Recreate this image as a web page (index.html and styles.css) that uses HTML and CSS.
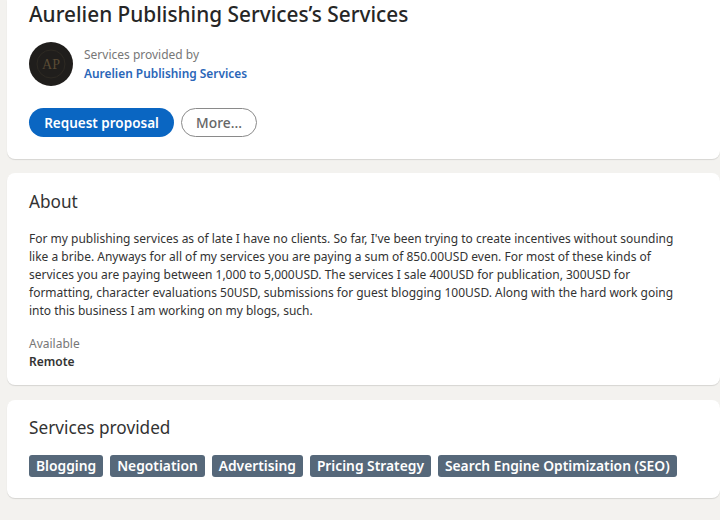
FILE: index.html
```html
<!DOCTYPE html>
<html>
<head>
    <title>Aurelien Publishing Services's Services</title>
    <link rel="stylesheet" href="styles.css">
</head>
<body>
    <div class="page">
        <section class="card card-top">
            <h1>Aurelien Publishing Services’s Services</h1>
            <div class="provider">
                <svg class="avatar" width="44" height="44" viewBox="0 0 44 44">
                    <circle cx="22" cy="22" r="22" fill="#201e1c"/>
                    <circle cx="22" cy="22" r="14" fill="none" stroke="#2e2a23" stroke-width="1"/>
                    <text x="22" y="27" text-anchor="middle" class="avatar-text">AP</text>
                </svg>
                <div class="provider-text">
                    <div class="provider-label">Services provided by</div>
                    <a class="provider-name">Aurelien Publishing Services</a>
                </div>
            </div>
            <div class="actions">
                <button class="btn btn-primary">Request proposal</button>
                <button class="btn btn-more">More...</button>
            </div>
        </section>

        <section class="card card-about">
            <h2>About</h2>
            <p class="about-text">For my publishing services as of late I have no clients. So far, I've been trying to create incentives without sounding like a bribe. Anyways for all of my services you are paying a sum of 850.00USD even. For most of these kinds of services you are paying between 1,000 to 5,000USD. The services I sale 400USD for publication, 300USD for formatting, character evaluations 50USD, submissions for guest blogging 100USD. Along with the hard work going into this business I am working on my blogs, such.</p>
            <div class="avail-label">Available</div>
            <div class="avail-value">Remote</div>
        </section>

        <section class="card card-services">
            <h2>Services provided</h2>
            <div class="tags">
                <span class="tag">Blogging</span>
                <span class="tag">Negotiation</span>
                <span class="tag">Advertising</span>
                <span class="tag">Pricing Strategy</span>
                <span class="tag">Search Engine Optimization (SEO)</span>
            </div>
        </section>
    </div>
</body>
</html>
```
FILE: styles.css
```css
html, body {
    margin: 0;
    height: 520px;
    overflow: hidden;
}
body {
    background-color: #f3f2ef;
    font-family: "Noto Sans", "Open Sans", sans-serif;
    color: #2b2b2b;
}
.page {
    display: flex;
    flex-direction: column;
    gap: 14px;
    padding-left: 7px;
}
.card {
    background: #fff;
    border-radius: 0 0 8px 8px;
    box-shadow: 0 1px 1px rgba(0, 0, 0, 0.12);
    padding: 0 22px;
}
.card-top {
    height: 159px;
    box-sizing: border-box;
}
.card-about {
    height: 212px;
    box-sizing: border-box;
    border-radius: 8px;
    padding-top: 17px;
}
.card-services {
    height: 98px;
    box-sizing: border-box;
    border-radius: 8px;
    margin-top: 1px;
    padding-top: 16px;
}
h1 {
    margin: 0;
    font-size: 20.8px;
    line-height: 28px;
    font-weight: 500;
    color: #262626;
}
h2 {
    margin: 0;
    font-size: 17.2px;
    line-height: 24px;
    font-weight: 400;
    color: #333;
}
.provider {
    display: flex;
    align-items: center;
    gap: 11px;
    margin-top: 14px;
}
.avatar-text {
    font-family: "Liberation Serif", serif;
    font-size: 14px;
    fill: #5a4b34;
}
.provider-label {
    font-size: 12px;
    line-height: 18px;
    color: #777;
}
.provider-name {
    display: block;
    font-size: 11.9px;
    line-height: 18px;
    font-weight: 600;
    color: #2a66b8;
}
.actions {
    display: flex;
    gap: 7px;
    margin-top: 22px;
}
.btn {
    height: 29px;
    border-radius: 15px;
    font-family: inherit;
    padding: 0;
    box-sizing: border-box;
}
.btn-primary {
    width: 145px;
    border: none;
    background-color: #0a66c2;
    color: #fff;
    font-size: 13.5px;
    font-weight: 600;
}
.btn-more {
    width: 76px;
    border: 1px solid #8a8a8a;
    background-color: #fff;
    color: #666;
    font-size: 13.8px;
    font-weight: 500;
}
.about-text {
    margin: 16px 0 0;
    max-width: 650px;
    font-size: 12px;
    line-height: 18px;
    color: #333;
}
.avail-label {
    margin-top: 15px;
    font-size: 12px;
    line-height: 18px;
    color: #777;
}
.avail-value {
    font-size: 12px;
    line-height: 18px;
    font-weight: 600;
    color: #333;
}
.tags {
    display: flex;
    gap: 7px;
    margin-top: 15px;
}
.tag {
    background-color: #56687a;
    color: #fff;
    font-size: 13.8px;
    line-height: 22px;
    font-weight: 600;
    padding: 0 7px;
    border-radius: 3px;
    white-space: nowrap;
}
```
